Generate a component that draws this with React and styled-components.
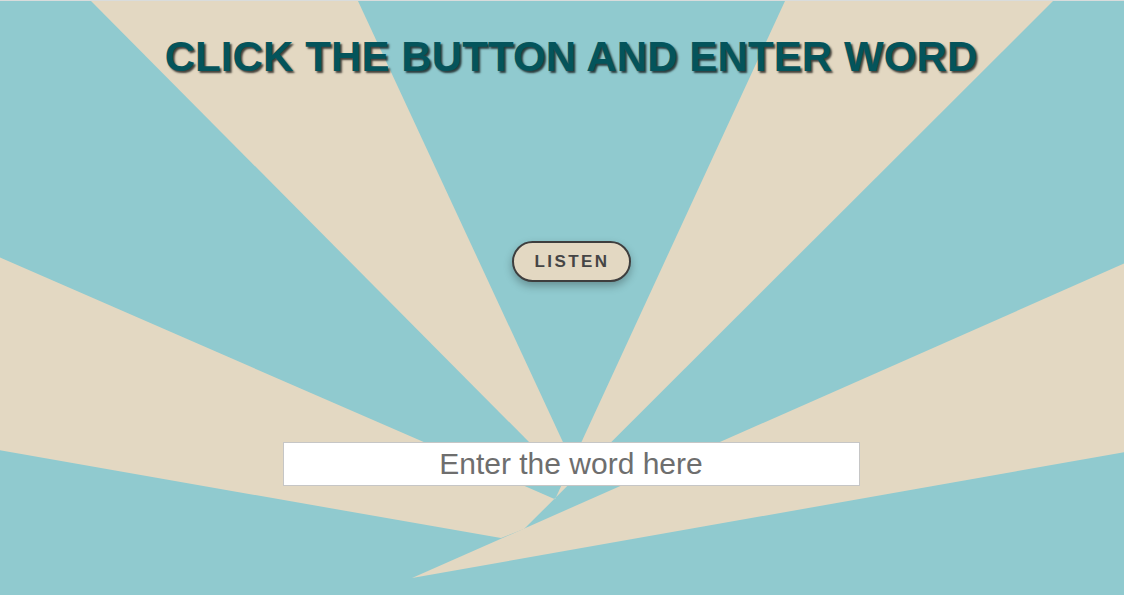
import React from "react"
import styled, { createGlobalStyle } from "styled-components"

const BLUE = "#90cacf"
const SAND = "#e3d8c2"

const GlobalStyle = createGlobalStyle`
  html, body {
    margin: 0;
    padding: 0;
    overflow: hidden;
  }
  body {
    font-family: "Liberation Sans", Arial, sans-serif;
    background: ${BLUE};
  }
`

const Page = styled.div`
  position: relative;
  box-sizing: border-box;
  width: 100%;
  height: 100vh;
  overflow: hidden;
  border-top: 1px solid #d9dcdc;
`

const Burst = styled.svg`
  position: absolute;
  inset: 0;
  width: 100%;
  height: 100%;
  z-index: 0;
`

const Content = styled.main`
  position: relative;
  z-index: 1;
  display: flex;
  flex-direction: column;
  align-items: center;
  padding-left: 18px;
  padding-top: 32px;
`

const Title = styled.h1`
  margin: 0;
  font-size: 42px;
  line-height: 48px;
  font-weight: 700;
  color: #04545b;
  text-shadow: 2px 2px 2px rgba(0, 0, 0, 0.7);
  letter-spacing: 0.1px;
`

const ListenButton = styled.button`
  box-sizing: border-box;
  margin-top: 160px;
  width: 119px;
  height: 41px;
  padding: 0 0 0 2px;
  border: 2px solid #3e3e3e;
  border-radius: 21px;
  background: ${SAND};
  color: #454545;
  font-family: "Liberation Sans", Arial, sans-serif;
  font-size: 17px;
  font-weight: 700;
  letter-spacing: 2.4px;
  box-shadow: 0 4px 8px rgba(0, 0, 0, 0.28);
  cursor: pointer;
`

const WordInput = styled.input`
  box-sizing: border-box;
  margin-top: 160px;
  width: 577px;
  height: 44px;
  border: 1px solid #c6c6c6;
  background: #ffffff;
  text-align: center;
  font-family: "Liberation Sans", Arial, sans-serif;
  font-size: 30px;
  color: #333;
  outline: none;
  &::placeholder {
    color: #6e6e6e;
  }
`

const rays = [
  "91,0 358,0 576,470 557,470",
  "785,0 1053,0 556,497",
  "0,257 555,499 556,497 524,529 501,538 0,450",
  "1124,263 1124,452 412,578",
]

const Background = () => (
  <Burst viewBox="0 0 1124 595" preserveAspectRatio="none">
    <rect width="1124" height="595" fill={BLUE} />
    {rays.map((p, i) => (
      <polygon key={i} points={p} fill={SAND} />
    ))}
  </Burst>
)

const App = () => {
  return (
    <Page>
      <GlobalStyle />
      <Background />
      <Content>
        <Title>CLICK THE BUTTON AND ENTER WORD</Title>
        <ListenButton>LISTEN</ListenButton>
        <WordInput type="text" placeholder="Enter the word here" />
      </Content>
    </Page>
  )
}

export default App
